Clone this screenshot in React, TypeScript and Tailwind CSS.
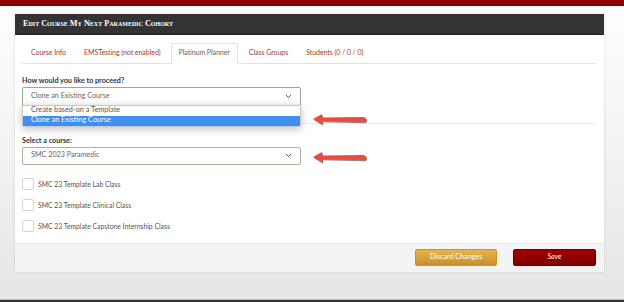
import React from "react";

const tabs: { title: string; active?: boolean }[] = [
  { title: "Course Info" },
  { title: "EMSTesting (not enabled)" },
  { title: "Platinum Planner", active: true },
  { title: "Class Groups" },
  { title: "Students (0 / 0 / 0)" },
];

const classes: string[] = [
  "SMC 23 Template Lab Class",
  "SMC 23 Template Clinical Class",
  "SMC 23 Template Capstone Internship Class",
];

const Chevron = () => (
  <svg width="7" height="5" viewBox="0 0 7 5" className="text-[#555]">
    <path d="M1 1 L3.5 3.5 L6 1" fill="none" stroke="currentColor" strokeWidth="1" />
  </svg>
);

const Arrow = () => (
  <svg width="58" height="14" viewBox="0 0 58 14">
    <path
      d="M2 7 L11 2 L11 5.5 L52 5 Q55 5 55 7.5 Q55 10 52 10 L11 9 L11 12.5 Z"
      fill="#3a1a18"
      opacity="0.55"
      transform="translate(1.2 1.2)"
    />
    <path
      d="M2 7 L11 2 L11 5.5 L52 5 Q55 5 55 7.5 Q55 10 52 10 L11 9 L11 12.5 Z"
      fill="#ee4b3f"
    />
  </svg>
);

const App = () => {
  return (
    <div
      className="w-[624px] h-[302px] flex flex-col overflow-hidden bg-gradient-to-b from-white to-[#e6e6e6] relative"
      style={{ fontFamily: "Lato, 'Noto Sans', sans-serif" }}
    >
      {/* верхняя красная полоса */}
      <div className="h-[6px] bg-[#8e0000]" />

      <div className="ml-[15px] mt-[8px] w-[589px] bg-white shadow-[0_0_3px_rgba(0,0,0,0.12)]">
        {/* заголовок */}
        <div className="h-[21px] bg-[#333333] flex items-center px-[8px] border-b border-[#222]">
          <div
            className="text-white font-bold text-[8.2px]"
            style={{ fontFamily: "'Liberation Serif', serif", fontVariant: "small-caps" }}
          >
            Edit Course My Next Paramedic Cohort
          </div>
        </div>

        <div className="px-[7px] pr-[8px]">
          {/* вкладки */}
          <div className="mt-[8px] flex border-b border-[#e2e2e2] h-[21px] text-[7.1px] tracking-[-0.1px] pl-[1px]">
            {tabs.map((tab, index) => (
              <div
                key={index}
                className={
                  tab.active
                    ? "h-[21px] px-[7px] flex items-center text-[#666] border border-b-white border-[#e2e2e2] rounded-t-[2px] bg-white mb-[-1px] mr-[3px]"
                    : "h-[21px] px-[8px] flex items-center text-[#a3402c] mr-[2px]"
                }
              >
                {tab.title}
              </div>
            ))}
          </div>

          {/* Как продолжить */}
          <div className="mt-[12px] text-[7.2px] font-bold text-[#333]">How would you like to proceed?</div>
          <div className="relative w-[279px]">
            <div className="h-[19px] border border-[#8fb08a] rounded-[2px] flex items-center justify-between px-[8px] text-[7.2px] text-[#666]">
              <span>Clone an Existing Course</span>
              <Chevron />
            </div>
            <div className="absolute left-0 top-[18px] w-[279px] bg-white border border-[#c8c8c8] rounded-b-[2px] shadow-[0_2px_8px_rgba(0,0,0,0.25)] z-10 text-[7.3px]">
              <div className="h-[10px] flex items-center px-[8px] text-[#555]">Create based-on a Template</div>
              <div className="h-[10px] flex items-center px-[8px] text-white bg-[#3d8ff0]">Clone an Existing Course</div>
            </div>
          </div>

          <div className="mt-[17px] border-t border-[#eeeeee]" />

          {/* Выбор курса */}
          <div className="mt-[12px] text-[7.2px] font-bold text-[#333]">Select a course:</div>
          <div className="w-[279px] h-[18px] border border-[#9cbb95] rounded-[2px] flex items-center justify-between px-[8px] text-[7.2px] text-[#666]">
            <span>SMC 2023 Paramedic</span>
            <Chevron />
          </div>

          {/* Классы */}
          <div className="mt-[13px] flex flex-col gap-[9px] pb-[11px]">
            {classes.map((item, index) => (
              <label key={index} className="flex items-center gap-[4px] h-[12px]">
                <div className="w-[12px] h-[12px] border border-[#d4d4d4] rounded-[2px] bg-white" />
                <span className="text-[6.8px] text-[#555]">{item}</span>
              </label>
            ))}
          </div>
        </div>

        {/* футер */}
        <div className="h-[29px] bg-[#f3f3f3] border-t border-[#ebebeb] flex items-center justify-end pr-[8px] gap-[16px]">
          <button className="w-[82px] h-[17px] rounded-[2px] border border-[#c9902c] bg-gradient-to-b from-[#e8b44a] to-[#c98f2c] text-white text-[7.2px]">
            Discard Changes
          </button>
          <button className="w-[83px] h-[17px] rounded-[2px] border border-[#6a0000] bg-gradient-to-b from-[#a00000] to-[#7e0000] text-white text-[7.2px] italic">
            Save
          </button>
        </div>
      </div>

      <div className="flex-1" />
      <div className="h-[1px] bg-[#bdbdbd]" />
      <div className="h-[2px] bg-[#333]" />

      {/* стрелки */}
      <div className="absolute left-[311px] top-[112px]">
        <Arrow />
      </div>
      <div className="absolute left-[311px] top-[150px]">
        <Arrow />
      </div>
    </div>
  );
};

export default App;
